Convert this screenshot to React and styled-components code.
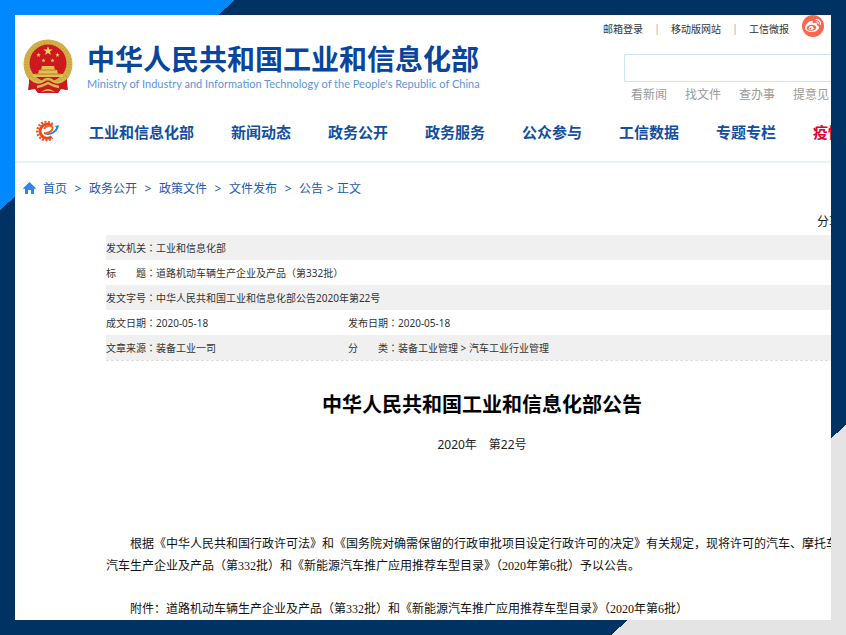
import styled, { createGlobalStyle } from "styled-components"
import { FaWeibo } from "react-icons/fa"

const GlobalStyle = createGlobalStyle`
  * {
    box-sizing: border-box;
  }
  body {
    margin: 0;
    font-family: "Noto Sans", "Noto Sans CJK SC", sans-serif;
    color: #333;
  }
  a {
    color: inherit;
    text-decoration: none;
  }
`

const PageStyled = styled.div`
  display: grid;
  grid-template-columns: minmax(0, 1fr);
  min-height: 100vh;
  padding: 15px;
  background:
    linear-gradient(to bottom right, #0088ff 50%, transparent 50%) 0 0 / 235px 210px no-repeat,
    linear-gradient(to top left, #e4e4e4 50%, transparent 50%) 100% 100% / 235px 210px no-repeat,
    #003263;
`

const FrameStyled = styled.div`
  background-color: #fff;
  overflow: hidden;
`

const HeaderStyled = styled.header`
  display: flex;
  justify-content: space-between;
  height: 86px;
  padding-left: 8px;
`

const BrandStyled = styled.div`
  display: flex;
  align-items: flex-start;
  gap: 14px;
  padding-top: 24px;
  white-space: nowrap;
`

const BrandTitleStyled = styled.h1`
  margin: 2px 0 0;
  font-family: "Noto Sans CJK SC", sans-serif;
  font-size: 28px;
  line-height: 34px;
  font-weight: 700;
  color: #08459b;
`

const BrandSubtitleStyled = styled.p`
  margin: 0;
  font-family: Lato, sans-serif;
  font-size: 11px;
  line-height: 18px;
  color: #5b95db;
`

const ToolsStyled = styled.div`
  display: flex;
  flex-direction: column;
  align-items: flex-end;
  white-space: nowrap;
  & > * {
    flex-shrink: 0;
  }
`

const TopLinksStyled = styled.div`
  display: flex;
  align-items: center;
  height: 26px;
  padding-right: 7px;
  font-size: 10px;
  & > span {
    width: 28px;
    text-align: center;
    color: #aaa;
  }
`

const WeiboLinkStyled = styled.a`
  display: flex;
  align-items: center;
  justify-content: center;
  width: 22px;
  height: 22px;
  margin: 0 0 4px 13px;
  border-radius: 50%;
  background-color: #fb6650;
  color: #fff;
`

const SearchInputStyled = styled.input`
  width: 207px;
  height: 28px;
  margin-top: 13px;
  padding: 0 8px;
  border: 1px solid #cfe3f1;
  border-right: 0;
  border-radius: 2px 0 0 2px;
  font-size: 12px;
  outline: none;
`

const QuickLinksStyled = styled.div`
  display: flex;
  gap: 18px;
  margin-top: 4px;
  padding-right: 2px;
  font-size: 12px;
  line-height: 18px;
  color: #999;
`

const NavStyled = styled.nav`
  display: flex;
  align-items: center;
  gap: 37px;
  height: 62px;
  padding-left: 20px;
  border-bottom: 2px solid #e9f2f7;
  font-family: "Noto Sans CJK SC", sans-serif;
  font-size: 15px;
  font-weight: 700;
  white-space: nowrap;
  color: #124f9f;
  & > svg {
    flex-shrink: 0;
    margin-right: -7px;
  }
`

const NavLinkStyled = styled.a`
  color: ${({ $highlight }) => ($highlight ? "#e0022f" : "inherit")};
`

const BreadcrumbStyled = styled.div`
  display: flex;
  align-items: center;
  height: 50px;
  padding-left: 8px;
  font-size: 12px;
  color: #1a5ba8;
  & > svg {
    margin-right: 7px;
  }
`

const SeparatorStyled = styled.span`
  width: ${({ $narrow }) => ($narrow ? 14 : 22)}px;
  text-align: center;
`

const ShareStyled = styled.div`
  margin-right: -10px;
  padding-bottom: 4px;
  font-size: 12px;
  line-height: 18px;
  text-align: right;
  color: #222;
`

// the article column is wider than the frame and gets cut on the right
const ArticleStyled = styled.article`
  margin: 0 -27px 0 91px;
`

const MetaTableStyled = styled.table`
  width: 100%;
  table-layout: fixed;
  border-collapse: separate;
  border-spacing: 0;
  border-bottom: 1px dashed #ddd;
  font-size: 10px;
  white-space: nowrap;
  tr {
    height: 25px;
  }
  tr:nth-child(odd) {
    background-color: #f0f0f0;
  }
  th, td {
    padding: 0;
    font-weight: 400;
    text-align: left;
  }
`

// the TC face centres the full-width colon
const ColonStyled = styled.span`
  font-family: "Noto Sans CJK TC", sans-serif;
`

const ArticleTitleStyled = styled.h2`
  margin: 28px 0 0;
  font-family: "Noto Sans CJK SC", sans-serif;
  font-size: 20px;
  line-height: 30px;
  font-weight: 700;
  text-align: center;
  color: #000;
`

const IssueStyled = styled.p`
  margin: 16px 0 78px;
  font-size: 12px;
  line-height: 20px;
  text-align: center;
  color: #222;
`

const ParagraphStyled = styled.p`
  margin: 0 0 21px;
  font-family: "Liberation Serif", "Noto Sans CJK SC", serif;
  font-size: 12px;
  line-height: 22px;
  text-indent: 2em;
  color: #111;
  &:last-child {
    margin-bottom: 0;
  }
`

const navItems = ["工业和信息化部", "新闻动态", "政务公开", "政务服务", "公众参与", "工信数据", "专题专栏"]
const crumbs = ["首页", "政务公开", "政策文件", "文件发布", "公告"]
const quickLinks = ["看新闻", "找文件", "查办事", "提意见"]

const star = (cx, cy, r) =>
  Array.from({ length: 10 }, (_, i) => {
    const angle = (Math.PI / 5) * i - Math.PI / 2
    const radius = i % 2 ? r * 0.4 : r
    return `${cx + radius * Math.cos(angle)},${cy + radius * Math.sin(angle)}`
  }).join(" ")

const Emblem = () => (
  <svg width="50" height="54" viewBox="0 0 50 54" aria-hidden="true">
    <path d="M7 36 L5 51 L12 50 L15 54 L35 54 L38 50 L45 51 L43 36Z" fill="#cf1b1e" />
    <circle cx="25" cy="25" r="24.5" fill="#d2b04a" />
    <circle cx="25" cy="25" r="21.5" fill="none" stroke="#b5912f" strokeWidth="4" strokeDasharray="1 2" opacity="0.35" />
    <circle cx="25" cy="24" r="18.5" fill="#cc191d" />
    <polygon points={star(25, 12, 5)} fill="#f1d56b" />
    <polygon points={star(15.5, 16, 2.5)} fill="#eccb5c" />
    <polygon points={star(34.5, 16, 2.5)} fill="#eccb5c" />
    <polygon points={star(20.5, 21.5, 2.3)} fill="#eccb5c" />
    <polygon points={star(29.5, 21.5, 2.3)} fill="#eccb5c" />
    <path d="M19 27 H31 L32 31 H34 L35 35 H40 V38 H10 V35 H15 L16 31 H18Z" fill="#e1bf55" />
    <path d="M17 31 H33 M12 35 H38" stroke="#b67c27" strokeWidth="1" />
    <path d="M6 40 Q12 45 18 42 L25 39 L32 42 Q38 45 44 40 L43 51 L38 49 L35 54 H15 L12 49 L6 51Z" fill="#cc191d" />
    <path d="M7 39 Q14 46 20 42 Q25 38 30 42 Q36 46 43 39 M14 48 Q20 47 25 44 Q30 47 36 48" fill="none" stroke="#d9b64e" strokeWidth="2.4" />
    <path d="M18 53 Q25 47 32 53 Q25 51 18 53Z" fill="#d9b64e" />
  </svg>
)

const GearLogo = () => (
  <svg width="24" height="21" viewBox="0 0 24 21" aria-hidden="true">
    <path d="M17.6 3.6 A9 9 0 1 0 17.4 16.8" fill="none" stroke="#f0501e" strokeWidth="2.6" strokeDasharray="1.9 1.5" />
    <path d="M16.8 5 A7 7 0 1 0 16.6 15.6" fill="none" stroke="#ee471a" strokeWidth="2.8" />
    <path d="M9 12 C13 12.8 17.4 9.8 17.6 7.4 C17.8 3.8 11.6 4 9 8" fill="none" stroke="#f26322" strokeWidth="2" />
    <path d="M9 12.3 C11.8 16.6 23.5 12.2 23.9 4.2 L19.8 5.1 L21.2 6.4 C20 10.7 14.4 13 9 12.3Z" fill="#2586d6" />
  </svg>
)

const HomeIcon = () => (
  <svg width="13" height="12" viewBox="0 0 13 12" aria-hidden="true">
    <path d="M6.5 0 L13 6.2 L12 7.2 L11 6.4 V12 H8 V8 H5 V12 H2 V6.4 L1 7.2 L0 6.2Z" fill="#3385ee" />
  </svg>
)

const MetaLabel = ({ children }) => (
  <th scope="row">
    {children}
    <ColonStyled>：</ColonStyled>
  </th>
)

const MetaTable = () => (
  <MetaTableStyled>
    <colgroup>
      <col width="50" />
      <col width="192" />
      <col width="50" />
      <col />
    </colgroup>
    <tbody>
      <tr>
        <MetaLabel>发文机关</MetaLabel>
        <td colSpan="3">工业和信息化部</td>
      </tr>
      <tr>
        <MetaLabel>标　　题</MetaLabel>
        <td colSpan="3">道路机动车辆生产企业及产品（第332批）</td>
      </tr>
      <tr>
        <MetaLabel>发文字号</MetaLabel>
        <td colSpan="3">中华人民共和国工业和信息化部公告2020年第22号</td>
      </tr>
      <tr>
        <MetaLabel>成文日期</MetaLabel>
        <td>2020-05-18</td>
        <MetaLabel>发布日期</MetaLabel>
        <td>2020-05-18</td>
      </tr>
      <tr>
        <MetaLabel>文章来源</MetaLabel>
        <td>装备工业一司</td>
        <MetaLabel>分　　类</MetaLabel>
        <td>装备工业管理 &gt; 汽车工业行业管理</td>
      </tr>
    </tbody>
  </MetaTableStyled>
)

const App = () => {
  return (
    <>
      <GlobalStyle />

      <PageStyled>
        <FrameStyled>
          <HeaderStyled>
            <BrandStyled>
              <Emblem />
              <div>
                <BrandTitleStyled>中华人民共和国工业和信息化部</BrandTitleStyled>
                <BrandSubtitleStyled>
                  Ministry of Industry and Information Technology of the People's Republic of China
                </BrandSubtitleStyled>
              </div>
            </BrandStyled>

            <ToolsStyled>
              <TopLinksStyled>
                <a href="#mail">邮箱登录</a>
                <span>|</span>
                <a href="#mobile">移动版网站</a>
                <span>|</span>
                <a href="#weibao">工信微报</a>
                <WeiboLinkStyled href="#weibo" aria-label="微博">
                  <FaWeibo size={16} />
                </WeiboLinkStyled>
              </TopLinksStyled>
              <SearchInputStyled type="text" aria-label="搜索" />
              <QuickLinksStyled>
                {quickLinks.map(item => (
                  <a key={item} href="#quick">{item}</a>
                ))}
              </QuickLinksStyled>
            </ToolsStyled>
          </HeaderStyled>

          <NavStyled>
            <GearLogo />
            {navItems.map(item => (
              <NavLinkStyled key={item} href="#nav">{item}</NavLinkStyled>
            ))}
            <NavLinkStyled href="#nav" $highlight>疫情</NavLinkStyled>
          </NavStyled>

          <BreadcrumbStyled>
            <HomeIcon />
            {crumbs.map((item, i) => [
              <a key={item} href="#crumb">{item}</a>,
              <SeparatorStyled key={`${item}-sep`} $narrow={i === crumbs.length - 1}>&gt;</SeparatorStyled>
            ])}
            <span>正文</span>
          </BreadcrumbStyled>

          <ShareStyled>分享</ShareStyled>

          <ArticleStyled>
            <MetaTable />
            <ArticleTitleStyled>中华人民共和国工业和信息化部公告</ArticleTitleStyled>
            <IssueStyled>2020年　第22号</IssueStyled>
            <ParagraphStyled>
              根据《中华人民共和国行政许可法》和《国务院对确需保留的行政审批项目设定行政许可的决定》有关规定，现将许可的汽车、摩托车、汽车生产企业及产品（第332批）和《新能源汽车推广应用推荐车型目录》（2020年第6批）予以公告。
            </ParagraphStyled>
            <ParagraphStyled>
              附件：道路机动车辆生产企业及产品（第332批）和《新能源汽车推广应用推荐车型目录》（2020年第6批）
            </ParagraphStyled>
          </ArticleStyled>
        </FrameStyled>
      </PageStyled>
    </>
  )
}

export default App
